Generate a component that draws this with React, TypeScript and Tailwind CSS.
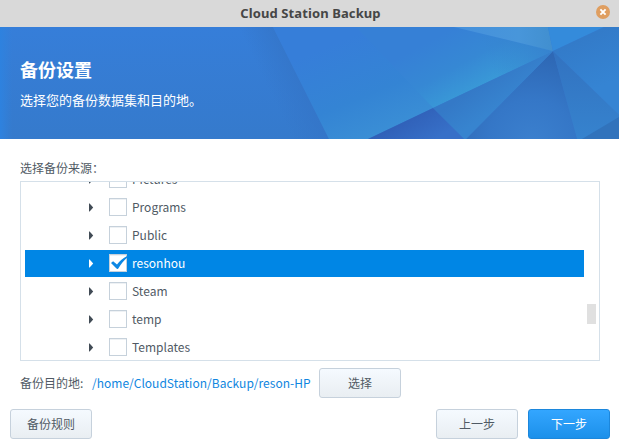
import React from "react";

const folders = ["Pictures", "Programs", "Public", "resonhou", "Steam", "temp", "Templates"];

function Banner() {
  return (
    <svg className="absolute inset-0 h-full w-full" viewBox="0 0 619 112" preserveAspectRatio="none" aria-hidden="true">
      <defs>
        <linearGradient id="base" x1="0" y1="0" x2="0" y2="1">
          <stop offset="0" stopColor="#367ed9" />
          <stop offset="1" stopColor="#357acc" />
        </linearGradient>
        <linearGradient id="edge" x1="0" y1="0" x2="1" y2="0">
          <stop offset="0" stopColor="#2e82df" />
          <stop offset="1" stopColor="#2e82df" stopOpacity="0" />
        </linearGradient>
        <linearGradient id="fold" gradientUnits="userSpaceOnUse" x1="272" y1="70" x2="301" y2="56">
          <stop offset="0" stopColor="#3475c8" stopOpacity="0" />
          <stop offset="1" stopColor="#3475c8" stopOpacity="0.8" />
        </linearGradient>
        <linearGradient id="middle" gradientUnits="userSpaceOnUse" x1="350" y1="10" x2="388" y2="103">
          <stop offset="0" stopColor="#367ed9" />
          <stop offset="0.6" stopColor="#3484d4" />
          <stop offset="1" stopColor="#3a8ed5" />
        </linearGradient>
        <linearGradient id="cyan" gradientUnits="userSpaceOnUse" x1="455" y1="0" x2="486" y2="57">
          <stop offset="0" stopColor="#3680d6" />
          <stop offset="0.55" stopColor="#3688d4" />
          <stop offset="1" stopColor="#3999d7" />
        </linearGradient>
        <linearGradient id="cyanFade" gradientUnits="userSpaceOnUse" x1="495" y1="48" x2="553" y2="24">
          <stop offset="0" stopColor="#3682cf" stopOpacity="0" />
          <stop offset="1" stopColor="#3682cf" />
        </linearGradient>
        <linearGradient id="light" x1="0" y1="0" x2="1" y2="0">
          <stop offset="0" stopColor="#4590dc" />
          <stop offset="0.65" stopColor="#4896da" />
          <stop offset="1" stopColor="#418fcf" />
        </linearGradient>
        <linearGradient id="slope" gradientUnits="userSpaceOnUse" x1="475" y1="60" x2="492" y2="84">
          <stop offset="0" stopColor="#3479c7" />
          <stop offset="1" stopColor="#3784cf" />
        </linearGradient>
        <linearGradient id="navy" gradientUnits="userSpaceOnUse" x1="400" y1="94" x2="418" y2="123">
          <stop offset="0" stopColor="#3060b8" />
          <stop offset="1" stopColor="#3770c8" />
        </linearGradient>
        <radialGradient id="deep" gradientUnits="userSpaceOnUse" cx="532" cy="116" r="88">
          <stop offset="0" stopColor="#3b80ce" />
          <stop offset="0.5" stopColor="#3577c7" />
          <stop offset="1" stopColor="#2e68b5" />
        </radialGradient>
        <linearGradient id="right" gradientUnits="userSpaceOnUse" x1="590" y1="8" x2="611" y2="55">
          <stop offset="0" stopColor="#337bc9" />
          <stop offset="1" stopColor="#3584d3" />
        </linearGradient>
        <linearGradient id="lower" x1="0" y1="0" x2="0" y2="1">
          <stop offset="0" stopColor="#3272c0" />
          <stop offset="1" stopColor="#3683ce" />
        </linearGradient>
      </defs>
      <rect width="619" height="112" fill="url(#base)" />
      <rect width="12" height="112" fill="url(#edge)" />
      <polygon points="230,0 273,0 329,112 230,112" fill="url(#fold)" />
      <polygon points="273,0 363,0 433,81 368,112 329,112" fill="url(#middle)" />
      <polygon points="356,0 455,0 553,24 433,81" fill="url(#cyan)" />
      <polygon points="455,0 553,24 450,73" fill="url(#cyanFade)" />
      <polygon points="454,0 548,0 553,24" fill="url(#light)" />
      <polygon points="548,0 604,0 553,24" fill="#348bdb" />
      <polygon points="553,24 604,0 619,0 619,88" fill="url(#right)" />
      <polygon points="553,24 619,88 619,112 577,112" fill="url(#lower)" />
      <polygon points="582,112 619,90 619,112" fill="#3173bc" />
      <polygon points="553,24 577,112 466,112" fill="url(#deep)" />
      <polygon points="553,24 466,112 464,112 433,81" fill="url(#slope)" />
      <polygon points="433,81 464,112 368,112" fill="url(#navy)" />
    </svg>
  );
}

function Button({ label, primary = false }: { label: string; primary?: boolean }) {
  return (
    <button
      className={
        primary
          ? "h-[30px] w-[82px] rounded-[3px] border border-[#1c87dc] bg-linear-to-b from-[#33a6ff] to-[#1b90ea] text-[12px] leading-[28px] text-white"
          : "h-[30px] w-[82px] rounded-[3px] border border-[#c6d1dc] bg-linear-to-b from-[#f5faff] to-[#e9eef2] text-[12px] leading-[28px] text-[#505a64]"
      }
    >
      {label}
    </button>
  );
}

function FolderRow({ name }: { name: string }) {
  const selected = name === "resonhou";
  return (
    <div
      className={`mb-px flex h-[27px] w-[559px] items-center pb-px pl-[63px] ${
        selected ? "bg-[#0086e5] text-white" : "text-[#505a64]"
      }`}
    >
      <svg width="6" height="9" viewBox="0 0 6 9" className="mr-[15px]" fill={selected ? "#fff" : "#414b55"}>
        <path d="M1 0.5 L1.6 0.5 L5.2 4.5 L1.6 8.5 L1 8.5 Z" />
      </svg>
      <span className="h-[18px] w-[18px] border border-[#c6d1db] bg-white shadow-[inset_0_1px_0_#eef1f4]">
        {selected && (
          <svg width="18" height="16" viewBox="0 0 18 16" className="block overflow-visible">
            <path d="M1 8.1 L3.1 6.3 L7 9.4 C9.5 6.2 13 3.3 17.2 1.1 C17.8 0.9 18.2 1.8 17.7 2.2 C13.8 5.3 10.7 9.3 8.3 13.4 C7.8 14.1 7 14.1 6.5 13.5 Z" fill="#0d88e4" />
          </svg>
        )}
      </span>
      <span className="ml-[5px]">{name}</span>
    </div>
  );
}

export default function App() {
  return (
    <main className="flex h-[445px] w-[619px] flex-col overflow-hidden bg-white font-['Noto_Sans_CJK_SC',sans-serif] text-[12px] text-[#505a64]">
      <header className="relative flex h-[27px] shrink-0 items-center justify-center bg-[#d9d9d9]">
        <h1 className="pl-[2px] font-['Noto_Sans',sans-serif] text-[13px] font-bold tracking-[0.1px] text-[#464646]">Cloud Station Backup</h1>
        <button className="absolute top-[5px] right-[9px] h-[14px] w-[14px]" aria-label="Close">
          <svg width="14" height="14" viewBox="0 0 14 14">
            <circle cx="7" cy="7" r="7" fill="#df9e60" />
            <path d="M4.4 4.4 L9.6 9.6 M9.6 4.4 L4.4 9.6" stroke="#fff" strokeWidth="1.9" />
          </svg>
        </button>
      </header>
      <section className="relative h-[112px] shrink-0 text-white">
        <Banner />
        <div className="relative pt-[29px] pl-[20px]">
          <h2 className="text-[18px] leading-[27px] font-bold">备份设置</h2>
          <p className="mt-[7px] text-[13px] leading-[20px]">选择您的备份数据集和目的地。</p>
        </div>
      </section>
      <section className="pt-[19px] pr-[19px] pl-[20px]">
        <div className="h-[23px] leading-[20px]">选择备份来源：</div>
        <div className="flex h-[180px] border border-[#d5e0e9]">
          <div className="h-[178px] w-[563px] overflow-hidden pl-[4px]">
            <div className="-mt-[16px] text-[12px]">
              {folders.map((name) => (
                <FolderRow key={name} name={name} />
              ))}
            </div>
          </div>
          <div className="mt-[122px] ml-[3px] h-[20px] w-[9px] bg-[#e0e0e0]" />
        </div>
        <div className="mt-[7px] flex items-center">
          <span className="w-[72px]">备份目的地:</span>
          <span className="w-[227px] whitespace-nowrap text-[12px] tracking-[0.02px] text-[#0f86e0]">/home/CloudStation/Backup/reson-HP</span>
          <Button label="选择" />
        </div>
      </section>
      <footer className="mt-[11px] flex pl-[10px]">
        <Button label="备份规则" />
        <div className="ml-auto flex gap-[10px] pr-[9px]">
          <Button label="上一步" />
          <Button label="下一步" primary />
        </div>
      </footer>
    </main>
  );
}
